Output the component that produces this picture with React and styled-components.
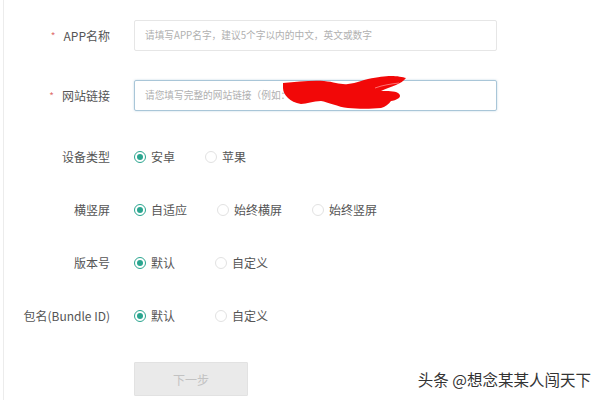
import React from "react";
import styled, { createGlobalStyle } from "styled-components";

const GlobalStyle = createGlobalStyle`
  html, body {
    margin: 0;
    padding: 0;
    background: #fff;
  }
  body {
    font-family: "Noto Sans CJK SC", "Noto Sans", sans-serif;
  }
`;

const Page = styled.div`
  position: relative;
  width: 597px;
  height: 400px;
  margin-left: 3px;
  border-left: 1px solid #ececec;
  box-sizing: border-box;
  overflow: hidden;
`;

const Form = styled.div`
  display: flex;
  flex-direction: column;
  padding-top: 5px;
`;

const Row = styled.div`
  display: grid;
  grid-template-columns: 106px 1fr;
  column-gap: 24px;
  align-items: center;
  height: ${({ tall }) => (tall ? "60px" : "53px")};
  margin-bottom: ${({ spaced }) => (spaced ? "5px" : "0")};
`;

const Label = styled.div`
  text-align: right;
  font-size: 12px;
  color: #555;
  white-space: nowrap;
`;

const Star = styled.span`
  color: #e07070;
  font-size: 10px;
  margin-right: 8px;
  vertical-align: 1px;
`;

const InputWrap = styled.div`
  position: relative;
  width: 363px;
  height: 31px;
  box-sizing: border-box;
  border: 1px solid ${({ focus }) => (focus ? "#a9c6d8" : "#e6e6e6")};
  box-shadow: ${({ focus }) => (focus ? "0 0 2px rgba(120,170,200,0.5)" : "none")};
  border-radius: 2px;
  display: flex;
  align-items: center;
  padding-left: 10px;
  font-size: 9.7px;
  color: #b0b0b0;
  white-space: nowrap;
`;

const Scribble = styled.svg`
  position: absolute;
  left: 148px;
  top: -5px;
`;

const Options = styled.div`
  display: flex;
  align-items: center;
  gap: 30px;
`;

const Option = styled.label`
  display: flex;
  align-items: center;
  gap: 5px;
  font-size: 12px;
  color: #555;
`;

const Radio = styled.span`
  width: 12px;
  height: 12px;
  box-sizing: border-box;
  border-radius: 50%;
  border: 1px solid ${({ checked }) => (checked ? "#2aa58f" : "#e2e2e2")};
  display: flex;
  align-items: center;
  justify-content: center;
  &::after {
    content: "";
    width: 6px;
    height: 6px;
    border-radius: 50%;
    background: ${({ checked }) => (checked ? "#2aa58f" : "transparent")};
  }
`;

const ButtonRow = styled.div`
  padding-left: 130px;
  margin-top: 20px;
`;

const NextButton = styled.button`
  width: 114px;
  height: 34px;
  border: 1px solid #e2e2e2;
  background: #eaeaea;
  color: #c2c2c2;
  font-family: inherit;
  font-size: 12px;
  border-radius: 1px;
`;

const Watermark = styled.div`
  position: absolute;
  right: 9px;
  bottom: 10px;
  font-size: 15.5px;
  color: #333;
  text-shadow: 0 0 2px #fff, 0 0 3px #fff;
`;

const groups = [
  { label: "设备类型", options: ["安卓", "苹果"] },
  { label: "横竖屏", options: ["自适应", "始终横屏", "始终竖屏"] },
  { label: "版本号", options: ["默认", "自定义"], wide: true },
  { label: "包名(Bundle ID)", options: ["默认", "自定义"], wide: true },
];

export default function App() {
  return (
    <>
      <GlobalStyle />
      <Page>
        <Form>
          <Row tall>
            <Label>
              <Star>*</Star>APP名称
            </Label>
            <InputWrap>请填写APP名字，建议5个字以内的中文，英文或数字</InputWrap>
          </Row>
          <Row tall spaced>
            <Label>
              <Star>*</Star>网站链接
            </Label>
            <InputWrap focus>
              请您填写完整的网站链接（例如：
              {/* red scribble hiding the example url */}
              <Scribble width="126" height="34" viewBox="0 0 126 34">
                <path
                  d="M0 7 C14 6 28 4 41 5 C52 6 58 9 65 8 C74 7 80 4 85 3 C95 1 102 0 108 0 C114 0 120 1 123 2 C121 5 117 7 113 9 C108 11 102 13 98 15 C104 15 112 15 115 17 C118 19 117 21 116 22 C113 24 110 25 108 25 C106 28 102 31 98 32 C88 33 75 33 65 32 C55 31 45 26 38 25 C30 25 24 28 18 28 C12 27 8 25 5 22 C2 19 0 16 0 12 Z"
                  fill="#f20808"
                />
                <path d="M92 12 C100 9 108 8 116 7" stroke="#ff7070" strokeWidth="1" fill="none" />
              </Scribble>
            </InputWrap>
          </Row>
          {groups.map((g) => (
            <Row key={g.label}>
              <Label>{g.label}</Label>
              <Options>
                {g.options.map((o, i) => (
                  <Option key={o} style={g.wide && i === 0 ? { minWidth: "51px" } : undefined}>
                    <Radio checked={i === 0} />
                    {o}
                  </Option>
                ))}
              </Options>
            </Row>
          ))}
          <ButtonRow>
            <NextButton>下一步</NextButton>
          </ButtonRow>
        </Form>
        <Watermark>头条 @想念某某人闯天下</Watermark>
      </Page>
    </>
  );
}
